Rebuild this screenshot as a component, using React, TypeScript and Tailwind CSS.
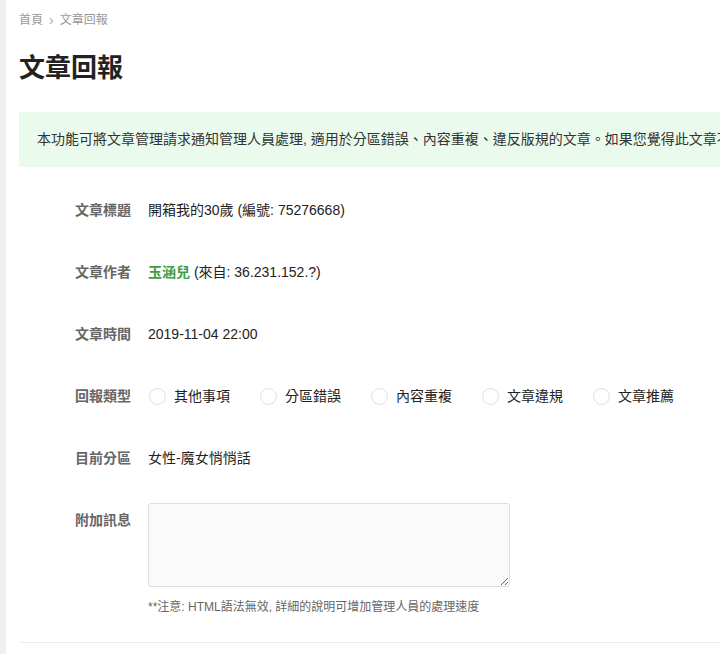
import React from "react";

const font = { fontFamily: '"Liberation Sans", "Noto Sans CJK TC", sans-serif' };

const options = ["其他事項", "分區錯誤", "內容重複", "文章違規", "文章推薦"];

function Row({ label, children }: { label: string; children: React.ReactNode }) {
    return (
        <div className="flex items-center h-[62px]">
            <div className="w-[112px] shrink-0 text-right text-[14px] font-bold text-[#666] leading-[20px]">{label}</div>
            <div className="ml-[17px] text-[14px] text-[#222] leading-[20px]">{children}</div>
        </div>
    );
}

export default function App() {
    return (
        <div className="min-h-screen bg-white flex overflow-hidden" style={font}>
            {/* left rail */}
            <div className="w-[6px] shrink-0 bg-[#efefef]" />

            <div className="flex-1 min-w-0 pl-[13px]">
                {/* Breadcrumb */}
                <div className="pt-[12px] flex items-center text-[12px] text-[#999] leading-[16px]">
                    <span>首頁</span>
                    <span className="mx-[6px] text-[14px] leading-[16px] text-[#aaa]">›</span>
                    <span>文章回報</span>
                </div>

                <h1 className="mt-[23px] text-[26px] font-bold text-[#222] leading-[34px]">文章回報</h1>

                {/* Notice */}
                <div className="mt-[27px] h-[55px] bg-[#eafbee] flex items-center pl-[18px] whitespace-nowrap text-[14px] text-[#333]">
                    本功能可將文章管理請求通知管理人員處理, 適用於分區錯誤、內容重複、違反版規的文章。如果您覺得此文章不當, 請選擇適當的回報類型。
                </div>

                {/* Form */}
                <div className="mt-[12px]">
                    <Row label="文章標題">開箱我的30歲 (編號: 75276668)</Row>
                    <Row label="文章作者">
                        <span className="font-bold text-[#3e9e48]">玉涵兒</span> (來自: 36.231.152.?)
                    </Row>
                    <Row label="文章時間">2019-11-04 22:00</Row>
                    <Row label="回報類型">
                        <div className="flex items-center">
                            {options.map((o) => (
                                <label key={o} className="flex items-center w-[111px] shrink-0">
                                    <span className="ml-[1px] w-[17px] h-[17px] rounded-full border border-[#dedede] bg-white" />
                                    <span className="ml-[8px] text-[#222]">{o}</span>
                                </label>
                            ))}
                        </div>
                    </Row>
                    <Row label="目前分區">女性-魔女悄悄話</Row>

                    <div className="flex items-start pt-[14px]">
                        <div className="w-[112px] shrink-0 text-right text-[14px] font-bold text-[#666] leading-[20px] pt-[7px]">附加訊息</div>
                        <div className="ml-[17px]">
                            <textarea className="block w-[362px] h-[84px] rounded-[3px] border border-[#ddd] bg-[#fafafa] resize-y" />
                            <div className="mt-[12px] text-[12px] text-[#666] leading-[16px]">**注意: HTML語法無效, 詳細的說明可增加管理人員的處理速度</div>
                        </div>
                    </div>
                </div>

                <div className="mt-[27px] h-px bg-[#eee]" />
            </div>
        </div>
    );
}
